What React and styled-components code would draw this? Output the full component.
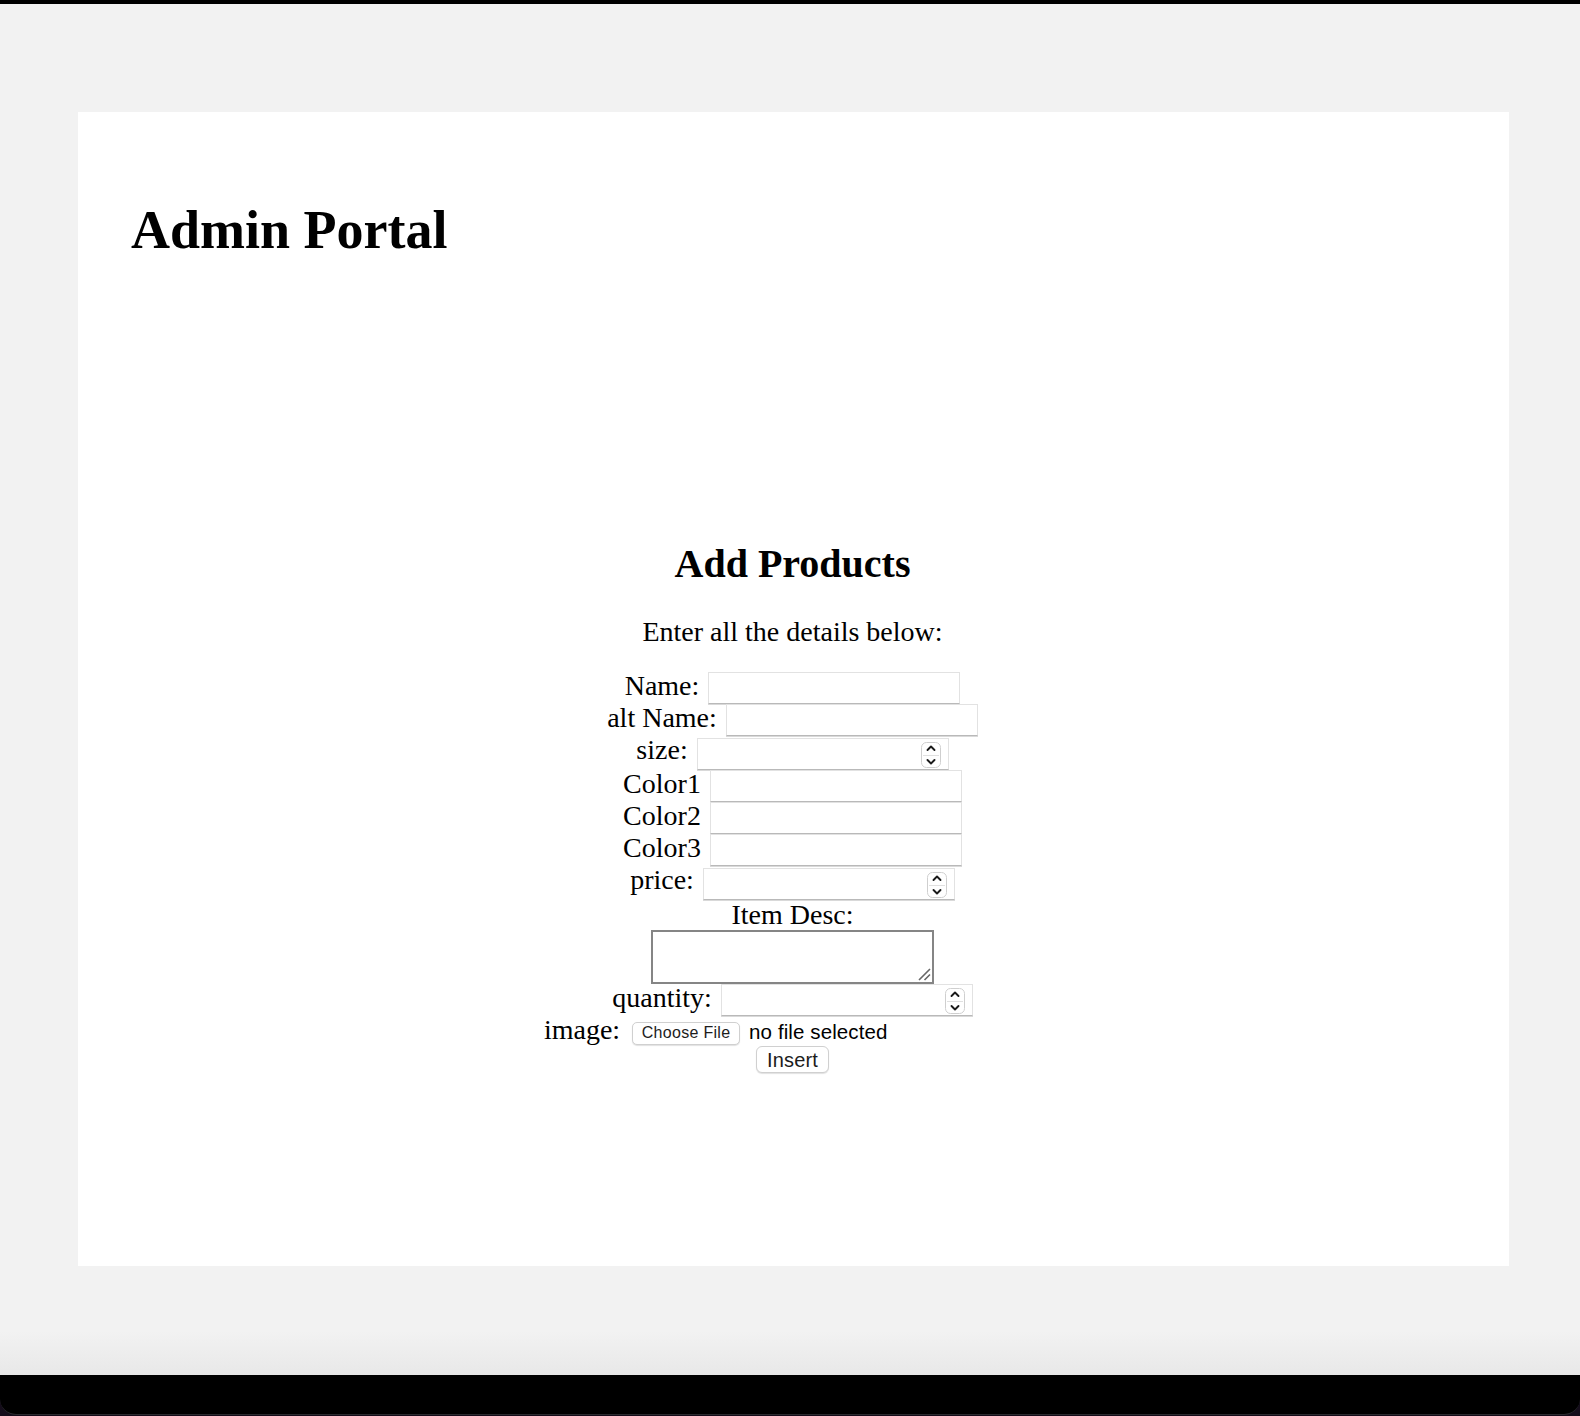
import React from 'react'
import styled, { createGlobalStyle } from 'styled-components'

const GlobalStyle = createGlobalStyle`
  body {
    margin: 0;
    background: #f2f2f2;
    font-family: "Liberation Serif", "Times New Roman", serif;
    color: #000;
  }
`

const Page = styled.div`
  min-height: 1416px;
  display: flex;
  flex-direction: column;
`

const TopBar = styled.div`
  height: 4px;
  flex-shrink: 0;
  background: #000;
`

const Stage = styled.main`
  padding: 108px 71px 109px 78px;
  background: linear-gradient(to bottom, #f2f2f2 calc(100% - 44px), #e8e8e8 100%);
`

const Panel = styled.section`
  background: #fff;
  height: 1154px;
  box-sizing: border-box;
  padding-top: 87px;
`

const Title = styled.h1`
  margin: 0;
  padding-left: 53px;
  font-size: 54px;
  line-height: 62px;
  font-weight: bold;
`

const ProductForm = styled.form`
  margin-top: 280px;
  padding-right: 2px;
  display: flex;
  flex-direction: column;
  align-items: center;
`

const FormTitle = styled.h2`
  margin: 0;
  font-size: 40px;
  line-height: 46px;
  font-weight: bold;
`

const Intro = styled.p`
  margin: 29px 0 25px;
  font-size: 28px;
  line-height: 31px;
`

const Row = styled.div`
  display: flex;
  align-items: flex-start;
  justify-content: center;
  gap: ${p => p.$gap || 9}px;
  height: ${p => p.$height || 32}px;
`

const Label = styled.label`
  font-size: 28px;
  line-height: 28px;
  white-space: pre;
`

const fieldBorder = `
  border: 1px solid #e2e2e2;
  border-bottom-color: #b9b9b9;
  box-shadow: 0 1px 0 #d9d9d9;
`

const TextInput = styled.input`
  width: 252px;
  height: 32px;
  box-sizing: border-box;
  margin: 0;
  padding: 0 4px;
  ${fieldBorder}
  border-radius: 0;
  background: #fff;
  font: 20px "Liberation Sans", Arial, sans-serif;
  outline: none;
`

const NumberField = styled.div`
  width: 252px;
  height: 32px;
  box-sizing: border-box;
  margin-top: ${p => (p.$flush ? 0 : 2)}px;
  padding: 3px 7px 0 0;
  ${fieldBorder}
  display: flex;
  align-items: flex-start;
  background: #fff;

  input {
    flex: 1;
    min-width: 0;
    height: 24px;
    border: none;
    outline: none;
    background: transparent;
    font: 20px "Liberation Sans", Arial, sans-serif;
  }
`

const SpinnerSvg = styled.svg`
  width: 20px;
  height: 26px;
  flex-shrink: 0;
`

const DescLabel = styled.label`
  font-size: 28px;
  line-height: 30px;
`

const grip =
  "data:image/svg+xml,%3Csvg xmlns='http://www.w3.org/2000/svg' width='14' height='14'%3E%3Cpath d='M2 13 L13 2 M7.5 13 L13 7.5' stroke='%23676767' stroke-width='1.6' fill='none'/%3E%3C/svg%3E"

const DescArea = styled.textarea`
  display: block;
  width: 283px;
  height: 54px;
  box-sizing: border-box;
  margin: 0;
  border: 2px solid #858585;
  border-radius: 0;
  background: #fff url("${grip}") no-repeat right 1px bottom 1px;
  resize: none;
  font: 16px "Liberation Mono", monospace;
  outline: none;
`

const FileWidget = styled.div`
  width: 409px;
  display: flex;
  align-items: flex-start;
  gap: 9px;
`

const ChooseButton = styled.button`
  margin-top: 6px;
  width: 108px;
  height: 22.5px;
  padding: 0;
  border: 1px solid #d0d0d0;
  border-radius: 5px;
  background: #fff;
  box-shadow: 0 1px 1px rgba(0, 0, 0, 0.12);
  color: #1c1c1c;
  font: 16px "Liberation Sans", Arial, sans-serif;
  letter-spacing: 0.3px;
  line-height: 20px;
`

const FileName = styled.span`
  margin-top: 4px;
  font: 20.5px/24px "Liberation Sans", Arial, sans-serif;
  letter-spacing: 0.1px;
  color: #000;
`

const InsertButton = styled.button`
  width: 73px;
  height: 27px;
  padding: 0;
  border: 1px solid #d0d0d0;
  border-radius: 6px;
  background: #fff;
  box-shadow: 0 1px 1px rgba(0, 0, 0, 0.12);
  color: #1c1c1c;
  font: 20px/24px "Liberation Sans", Arial, sans-serif;
  letter-spacing: 0.2px;
`

const BottomBar = styled.div`
  height: 41px;
  flex-shrink: 0;
  background: #140c1a;
`

const Bezel = styled.div`
  height: 39px;
  background: #000;
  border-radius: 0 0 16px 16px;
  border-bottom: 1px solid #2a2a2e;
`

const Spinner = () => (
  <SpinnerSvg viewBox="0 0 20 26">
    <rect x="0.5" y="0.5" width="19" height="25" rx="5" fill="#fff" stroke="#cfcfcf" />
    <line x1="2" y1="13.5" x2="18" y2="13.5" stroke="#e0e0e0" />
    <path d="M6.5 8 L10 4.5 L13.5 8" fill="none" stroke="#1a1a1a" strokeWidth="1.9" strokeLinecap="round" strokeLinejoin="round" />
    <path d="M6.5 18 L10 21.5 L13.5 18" fill="none" stroke="#1a1a1a" strokeWidth="1.9" strokeLinecap="round" strokeLinejoin="round" />
  </SpinnerSvg>
)

const textFields = [
  { label: 'Name:', name: 'name' },
  { label: 'alt Name:', name: 'altName' },
]

const colorFields = ['Color1', 'Color2', 'Color3']

export default function App() {
  return (
    <>
      <GlobalStyle />
      <Page>
        <TopBar />
        <Stage>
          <Panel>
            <Title>Admin Portal</Title>
            <ProductForm onSubmit={e => e.preventDefault()}>
              <FormTitle>Add Products</FormTitle>
              <Intro>Enter all the details below:</Intro>

              {textFields.map(f => (
                <Row key={f.name}>
                  <Label>{f.label}</Label>
                  <TextInput type="text" name={f.name} />
                </Row>
              ))}

              <Row $height={34}>
                <Label>size:</Label>
                <NumberField>
                  <input type="text" name="size" />
                  <Spinner />
                </NumberField>
              </Row>

              {colorFields.map(c => (
                <Row key={c}>
                  <Label>{c}</Label>
                  <TextInput type="text" name={c.toLowerCase()} />
                </Row>
              ))}

              <Row $height={34}>
                <Label>price:</Label>
                <NumberField>
                  <input type="text" name="price" />
                  <Spinner />
                </NumberField>
              </Row>

              <DescLabel>Item Desc:</DescLabel>
              <DescArea name="desc" />

              <Row>
                <Label>quantity:</Label>
                <NumberField $flush>
                  <input type="text" name="quantity" />
                  <Spinner />
                </NumberField>
              </Row>

              <Row $height={30} $gap={12}>
                <Label>image:</Label>
                <FileWidget>
                  <ChooseButton type="button">Choose File</ChooseButton>
                  <FileName>no file selected</FileName>
                </FileWidget>
              </Row>

              <InsertButton type="submit">Insert</InsertButton>
            </ProductForm>
          </Panel>
        </Stage>
        <BottomBar>
          <Bezel />
        </BottomBar>
      </Page>
    </>
  )
}
